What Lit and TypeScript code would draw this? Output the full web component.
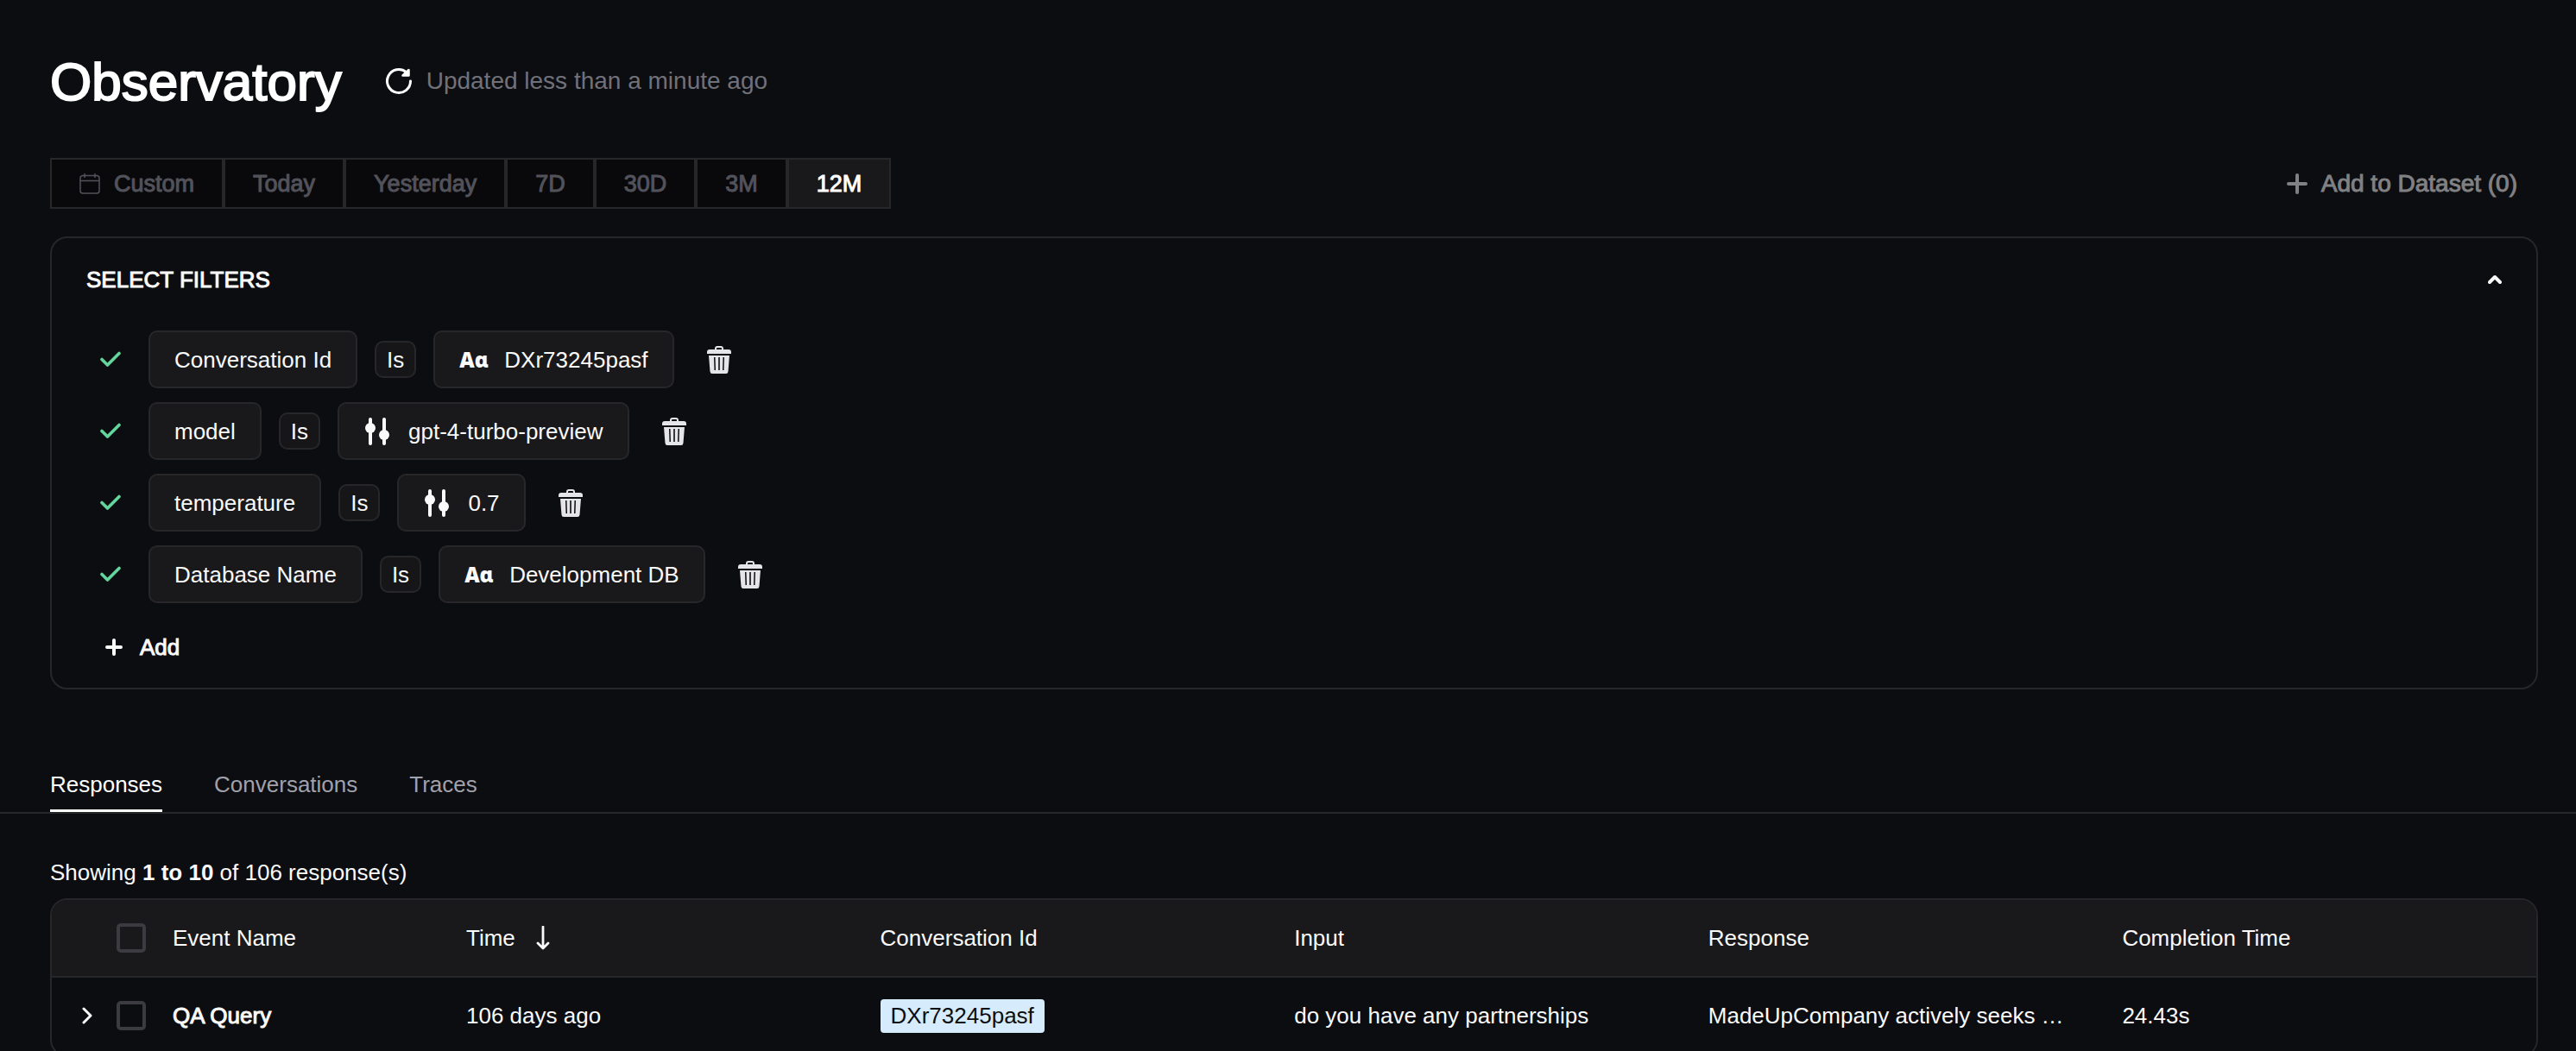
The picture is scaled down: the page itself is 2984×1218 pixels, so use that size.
import { LitElement, html, css, svg, nothing } from "lit";
import { customElement, state } from "lit/decorators.js";
import { classMap } from "lit/directives/class-map.js";

type FilterKind = "text" | "setting";

interface Filter {
  field: string;
  value: string;
  kind: FilterKind;
}

interface ResponseRow {
  event: string;
  time: string;
  conversation: string;
  input: string;
  response: string;
  completion: string;
}

const icon = (size: number, body: unknown) => html`
  <svg class="icon" width=${size} height=${size} viewBox="0 0 ${size} ${size}" aria-hidden="true">
    ${body}
  </svg>
`;

const calendarIcon = () => icon(24, svg`
  <g fill="none" stroke="currentColor" stroke-width="1.5">
    <rect x="1" y="2.5" width="22" height="20.5" rx="3" />
    <path d="M1 8.5H23M6 0V5M18 0V5" />
  </g>`);

const refreshIcon = () => icon(32, svg`
  <path d="M29.5 16A13.5 13.5 0 1 1 24.6 5.6" fill="none" stroke="currentColor" stroke-width="3" stroke-linecap="round" />
  <path d="M27.5 3V9.5H20.5Z" fill="currentColor" stroke="currentColor" stroke-width="2.5" stroke-linejoin="round" />`);

const plusIcon = (size: number) => icon(size, svg`
  <path d="M${size / 2} 2V${size - 2}M2 ${size / 2}H${size - 2}" fill="none" stroke="currentColor" stroke-width="4" stroke-linecap="round" />`);

const chevronUpIcon = () => icon(16, svg`
  <path d="M2 11L8 5L14 11" fill="none" stroke="currentColor" stroke-width="4" stroke-linecap="round" stroke-linejoin="round" />`);

const chevronRightIcon = () => icon(20, svg`
  <path d="M6 2L14 10L6 18" fill="none" stroke="currentColor" stroke-width="3" stroke-linecap="round" stroke-linejoin="round" />`);

const checkIcon = () => icon(24, svg`
  <path d="M2 11.5L8.5 18L22 4.5" fill="none" stroke="currentColor" stroke-width="3.6" stroke-linecap="round" stroke-linejoin="round" />`);

const slidersIcon = () => icon(32, svg`
  <path d="M8 2V30M24 2V30" fill="none" stroke="currentColor" stroke-width="4" stroke-linecap="round" />
  <circle cx="8" cy="12" r="6" fill="currentColor" />
  <circle cx="24" cy="20" r="6" fill="currentColor" />`);

const trashIcon = () => icon(32, svg`
  <path d="M12 5V3Q12 1 14 1H18Q20 1 20 3V5" fill="none" stroke="currentColor" stroke-width="2" />
  <path d="M5 4H27Q30 4 30 7V9H2V7Q2 4 5 4Z" fill="currentColor" />
  <path fill-rule="evenodd" fill="currentColor" d="M4 11H28L26.5 29.5Q26.3 32 24 32H8Q5.7 32 5.5 29.5ZM10 13L10.5 28H12L11.5 13ZM15.2 13V28H16.8V13ZM20.5 13L20 28H21.5L22 13Z" />`);

const arrowDownIcon = () => icon(28, svg`
  <path d="M14 1V26M8 20L14 26L20 20" fill="none" stroke="currentColor" stroke-width="2.8" stroke-linecap="round" stroke-linejoin="round" />`);

@customElement("app-root")
export class AppRoot extends LitElement {
  @state() private range = "12M";
  @state() private tab = "Responses";
  @state() private open = true;

  @state() private filters: Filter[] = [
    { field: "Conversation Id", value: "DXr73245pasf", kind: "text" },
    { field: "model", value: "gpt-4-turbo-preview", kind: "setting" },
    { field: "temperature", value: "0.7", kind: "setting" },
    { field: "Database Name", value: "Development DB", kind: "text" },
  ];

  private ranges = ["Custom", "Today", "Yesterday", "7D", "30D", "3M", "12M"];
  private tabs = ["Responses", "Conversations", "Traces"];

  private rows: ResponseRow[] = [
    {
      event: "QA Query",
      time: "106 days ago",
      conversation: "DXr73245pasf",
      input: "do you have any partnerships",
      response: "MadeUpCompany actively seeks …",
      completion: "24.43s",
    },
  ];

  static styles = css`
    :host {
      display: block;
      height: 100vh;
      overflow: hidden;
      box-sizing: border-box;
      padding-top: 58px;
      background: #0c0d11;
      color: #fafafa;
      font-family: "Liberation Sans", Arial, Helvetica, sans-serif;
      font-size: 26px;
      line-height: 32px;
    }
    *, *::before, *::after { box-sizing: border-box; }
    button, input { font: inherit; color: inherit; margin: 0; }
    button {
      display: flex;
      align-items: center;
      padding: 0;
      border: 0;
      background: none;
      cursor: pointer;
      white-space: nowrap;
    }
    .icon { display: block; flex: none; }
    .medium { -webkit-text-stroke: 1px currentColor; }

    .header, .toolbar, .panel, .summary, .table-card { margin-inline: 58px 44px; }

    .header { display: flex; align-items: center; gap: 50px; height: 72px; }
    .title {
      margin: 0;
      padding-top: 2px;
      font-size: 62px;
      line-height: 72px;
      font-weight: 400;
      color: #fff;
      -webkit-text-stroke: 2px currentColor;
    }
    .updated { display: flex; align-items: center; gap: 16px; font-size: 28px; color: #71717a; }
    .refresh { color: #fff; }

    .toolbar { display: flex; justify-content: space-between; align-items: center; margin-top: 53px; }
    .ranges { display: flex; }
    .range {
      gap: 16px;
      height: 59px;
      padding: 0 32px;
      border: 2px solid #27272a;
      background: #09090b;
      color: #52525b;
      font-size: 27px;
    }
    .range.active { background: #19191b; color: #fff; }
    .dataset { gap: 16px; padding-inline: 24px; font-size: 28px; color: #818183; }

    .panel {
      margin-top: 32px;
      padding: 32px 40px 30px;
      border: 2px solid #27272a;
      border-radius: 20px;
    }
    .panel-head { display: flex; justify-content: space-between; align-items: center; }
    .panel-title { margin: 0; font-size: 26px; line-height: 32px; font-weight: 400; }
    .filters {
      display: flex;
      flex-direction: column;
      gap: 16px;
      margin: 43px 0 0;
      padding: 0;
      list-style: none;
    }
    .filter { display: flex; align-items: center; gap: 20px; padding-left: 16px; }
    .check { color: #62d69d; margin-right: 12px; }
    .chip {
      gap: 20px;
      height: 67px;
      padding: 0 28px;
      border: 2px solid #27272a;
      border-radius: 10px;
      background: #19191b;
    }
    .operator {
      height: 43px;
      padding: 0 12px;
      border: 2px solid #27272a;
      border-radius: 10px;
      background: #161618;
    }
    .letters {
      width: 32px;
      font-family: "Noto Sans", "Open Sans", sans-serif;
      font-size: 24px;
      font-weight: 900;
    }
    .trash { padding-inline: 16px; color: #e4e4e9; }
    .add { gap: 20px; margin: 35px 0 0 22px; padding-bottom: 1px; }

    .tabs {
      display: flex;
      gap: 60px;
      margin-top: 94px;
      padding-left: 58px;
      border-bottom: 2px solid #27272a;
    }
    .tab { padding-bottom: 13px; border-bottom: 3px solid transparent; color: #a1a1aa; }
    .tab.active { border-color: #fff; color: #fff; }

    .summary { margin-block: 52px 14px; }
    .table-card { border: 2px solid #27272a; border-radius: 20px; overflow: hidden; }
    .table { width: 100%; table-layout: fixed; border-collapse: separate; border-spacing: 0; }
    .col-expand { width: 75px; }
    .col-check { width: 65px; }
    .col-event { width: 340px; }
    .cell { padding: 0; text-align: left; font-weight: 400; white-space: nowrap; }
    .head .cell { height: 90px; border-bottom: 2px solid #27272a; background: #19191b; }
    .body .cell { height: 90px; border-bottom: 2px solid #27272a; }
    .expand { padding-left: 31px; }
    .sort { gap: 18px; }
    .tag {
      display: inline-block;
      padding: 3px 12px 4px;
      border-radius: 4px;
      background: #d6ebfb;
      color: #0c0d11;
    }
    .checkbox {
      appearance: none;
      display: block;
      width: 34px;
      height: 34px;
      border: 4px solid #3b3b41;
      border-radius: 5px;
      background: transparent;
    }
    .checkbox:checked { background: #fafafa; }
  `;

  private removeFilter(target: Filter) {
    this.filters = this.filters.filter((f) => f !== target);
  }

  private renderFilter(f: Filter) {
    return html`
      <li class="filter">
        <span class="check">${checkIcon()}</span>
        <button class="chip" type="button">${f.field}</button>
        <button class="operator" type="button">Is</button>
        <button class="chip" type="button">
          ${f.kind === "text"
            ? html`<span class="letters" aria-hidden="true">Aɑ</span>`
            : slidersIcon()}
          ${f.value}
        </button>
        <button class="trash" type="button" aria-label="Remove filter" @click=${() => this.removeFilter(f)}>
          ${trashIcon()}
        </button>
      </li>
    `;
  }

  private renderRow(r: ResponseRow) {
    return html`
      <tr>
        <td class="cell">
          <button class="expand" type="button" aria-label="Expand row">${chevronRightIcon()}</button>
        </td>
        <td class="cell"><input class="checkbox" type="checkbox" aria-label="Select row" /></td>
        <td class="cell medium">${r.event}</td>
        <td class="cell">${r.time}</td>
        <td class="cell"><span class="tag">${r.conversation}</span></td>
        <td class="cell">${r.input}</td>
        <td class="cell">${r.response}</td>
        <td class="cell">${r.completion}</td>
      </tr>
    `;
  }

  render() {
    return html`
      <header class="header">
        <h1 class="title">Observatory</h1>
        <div class="updated">
          <button class="refresh" type="button" aria-label="Refresh">${refreshIcon()}</button>
          <span>Updated less than a minute ago</span>
        </div>
      </header>

      <div class="toolbar">
        <div class="ranges">
          ${this.ranges.map((r) => html`
            <button
              type="button"
              class=${classMap({ range: true, medium: true, active: r === this.range })}
              @click=${() => (this.range = r)}
            >${r === "Custom" ? calendarIcon() : nothing}${r}</button>
          `)}
        </div>
        <button class="dataset medium" type="button">${plusIcon(24)}Add to Dataset (0)</button>
      </div>

      <section class="panel">
        <div class="panel-head">
          <h2 class="panel-title medium">SELECT FILTERS</h2>
          <button type="button" aria-label="Toggle filters" @click=${() => (this.open = !this.open)}>
            ${chevronUpIcon()}
          </button>
        </div>
        ${this.open
          ? html`
              <ul class="filters">${this.filters.map((f) => this.renderFilter(f))}</ul>
              <button class="add medium" type="button">${plusIcon(20)}Add</button>
            `
          : nothing}
      </section>

      <div class="tabs" role="tablist">
        ${this.tabs.map((t) => html`
          <button
            type="button"
            role="tab"
            aria-selected=${t === this.tab ? "true" : "false"}
            class=${classMap({ tab: true, active: t === this.tab })}
            @click=${() => (this.tab = t)}
          >${t}</button>
        `)}
      </div>

      <div class="summary">Showing <b>1 to 10</b> of 106 response(s)</div>

      <div class="table-card">
        <table class="table">
          <colgroup>
            <col class="col-expand" />
            <col class="col-check" />
            <col class="col-event" />
            <col /><col /><col /><col /><col />
          </colgroup>
          <thead class="head">
            <tr>
              <th class="cell"></th>
              <th class="cell"><input class="checkbox" type="checkbox" aria-label="Select all rows" /></th>
              <th class="cell">Event Name</th>
              <th class="cell"><button class="sort" type="button">Time ${arrowDownIcon()}</button></th>
              <th class="cell">Conversation Id</th>
              <th class="cell">Input</th>
              <th class="cell">Response</th>
              <th class="cell">Completion Time</th>
            </tr>
          </thead>
          <tbody class="body">${this.rows.map((r) => this.renderRow(r))}</tbody>
        </table>
      </div>
    `;
  }
}
